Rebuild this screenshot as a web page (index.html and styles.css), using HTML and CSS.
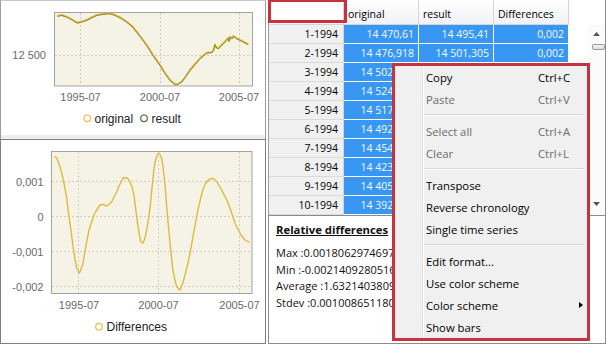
FILE: index.html
```html
<!DOCTYPE html>
<html>
<head>
<meta charset="utf-8">
<link rel="stylesheet" href="styles.css">
</head>
<body>
<div class="app">
  <div class="left">
    <div class="chart chart-top">
      <svg width="264" height="134" viewBox="1 1 264 134" xmlns="http://www.w3.org/2000/svg">
        <rect x="54.5" y="12.5" width="198" height="73.5" fill="#f5f3e6" stroke="#a3a3a3"/>
        <g stroke="#d0cdc0" stroke-dasharray="2,2" stroke-width="1">
          <line x1="80.5" y1="13" x2="80.5" y2="86"/>
          <line x1="160.5" y1="13" x2="160.5" y2="86"/>
          <line x1="239.5" y1="13" x2="239.5" y2="86"/>
          <line x1="55" y1="55.5" x2="252" y2="55.5"/>
        </g>
        <polyline fill="none" stroke="#e0c04c" stroke-width="2" stroke-linejoin="round" points="57.3,16 61.7,15 66.7,16.7 72,19.5 77.3,22.7 82,21.5 86.7,20 91.5,17.5 96.7,15 103,14 110,13.3 115,15 121,18 126.7,21.7 132,26 136.7,31.7 141.5,38 146.7,45 153,55 160,65 165,73 170,80 175,84.3 178,84 181.7,81.7 186,76 190,70 195,64 200,58.3 206.7,52.7 211.7,52.3 213.5,50 215,44.5 216.5,47.5 218.3,48.3 220,46.5 223.3,43.3 226,40.5 228,38 229,41 230,36.7 232,38.5 233.5,36 236.7,38.3 242,41 248.3,44.3"/>
        <polyline fill="none" stroke="#5b5f2c" stroke-width="0.8" stroke-opacity="0.75" stroke-linejoin="round" points="57.3,16.4 61.7,15.4 66.7,17.1 72,19.9 77.3,23.1 82,21.9 86.7,20.4 91.5,17.9 96.7,15.4 103,14.4 110,13.7 115,15.4 121,18.4 126.7,22.1 132,26.4 136.7,32.1 141.5,38.4 146.7,45.4 153,55.4 160,65.4 165,73.4 170,80.4 175,84.7 178,84.4 181.7,82.1 186,76.4 190,70.4 195,64.4 200,58.7 206.7,53.1 211.7,52.7 213.5,50.4 215,44.9 216.5,47.9 218.3,48.7 220,46.9 223.3,43.7 226,40.9 228,38.4 229,41.4 230,37.1 232,38.9 233.5,36.4 236.7,38.7 242,41.4 248.3,44.7"/>
        <g font-family="Liberation Sans, Arial, sans-serif" font-size="11" fill="#6a6a6a">
          <text x="46" y="59" text-anchor="end">12 500</text>
          <text x="80.5" y="100.5" text-anchor="middle">1995-07</text>
          <text x="160" y="100.5" text-anchor="middle">2000-07</text>
          <text x="239" y="100.5" text-anchor="middle">2005-07</text>
        </g>
        <circle cx="87.3" cy="118.3" r="3.3" fill="none" stroke="#e2c04a" stroke-width="1.2"/>
        <circle cx="144" cy="118.3" r="3.3" fill="none" stroke="#4f6a3a" stroke-width="1.2"/>
        <g font-family="Liberation Sans, Arial, sans-serif" font-size="12" fill="#222">
          <text x="94.5" y="122.5">original</text>
          <text x="151.5" y="122.5">result</text>
        </g>
      </svg>
    </div>
    <div class="splitter"></div>
    <div class="chart chart-bottom">
      <svg width="264" height="203" viewBox="1 140 264 203" xmlns="http://www.w3.org/2000/svg">
        <rect x="51.5" y="151.5" width="200.5" height="142" fill="#f5f3e6" stroke="#a3a3a3"/>
        <g stroke="#d0cdc0" stroke-dasharray="2,2" stroke-width="1">
          <line x1="78.5" y1="152" x2="78.5" y2="293"/>
          <line x1="158.5" y1="152" x2="158.5" y2="293"/>
          <line x1="239.5" y1="152" x2="239.5" y2="293"/>
          <line x1="52" y1="181.5" x2="252" y2="181.5"/>
          <line x1="52" y1="216.5" x2="252" y2="216.5"/>
          <line x1="52" y1="251.5" x2="252" y2="251.5"/>
          <line x1="52" y1="286.5" x2="252" y2="286.5"/>
        </g>
        <polyline fill="none" stroke="#e2b83c" stroke-width="1.4" stroke-linejoin="round" points="54.3,156.7 56.7,157.7 60,166.7 62,174 64.3,185 66.5,197 68.3,211.7 71,231 73.3,248.3 75,259 76.7,268.3 79.3,273.3 82.7,265 84.5,254 86.7,241.7 89,230 91.7,221.7 94,215 96.7,210 100,205 103.3,204.3 106.7,206 109,204.5 111.7,201.7 114,197 116.7,191.7 120,184 123.3,177.7 126,177.7 128,179 130,181.7 132,187 134,195 135.5,207 137.3,221.7 139,233 140.7,241.7 142.7,243.3 144.3,240 146,233.3 148,222 150,208.3 152,188 154,168.3 156,158 158.3,153.3 160,154.5 161.7,158.3 163.3,169 165,185 166.5,204 168.3,225 170.5,248 172.7,268.3 174.7,279 176.7,286.7 180,290 183.3,281.7 186,271 188.3,261.7 191,248 193.3,235 196,220 198.3,208.3 201,197 203.3,188.3 206,183 208.3,180 211.7,178.3 214,179 216.7,181.7 220,187 223.3,193.3 227,200.5 230,208.3 233,217 235,223.3 237.5,228.5 240,233.3 242.5,237 245,240 249.3,242.3"/>
        <g font-family="Liberation Sans, Arial, sans-serif" font-size="11" fill="#6a6a6a">
          <text x="43.5" y="185.5" text-anchor="end">0,001</text>
          <text x="43.5" y="220.5" text-anchor="end">0</text>
          <text x="43.5" y="255.5" text-anchor="end">-0,001</text>
          <text x="43.5" y="290.5" text-anchor="end">-0,002</text>
          <text x="79" y="309" text-anchor="middle">1995-07</text>
          <text x="158.5" y="309" text-anchor="middle">2000-07</text>
          <text x="239.5" y="309" text-anchor="middle">2005-07</text>
        </g>
        <circle cx="99" cy="326.7" r="3.3" fill="none" stroke="#e2c04a" stroke-width="1.2"/>
        <text x="106.5" y="331" font-family="Liberation Sans, Arial, sans-serif" font-size="12" fill="#222">Differences</text>
      </svg>
    </div>
  </div>
  <div class="gap"></div>
  <div class="right">
    <div class="grid-area">
      <div class="grid">
        <div class="corner"></div>
        <div class="hcell">original</div>
        <div class="hcell">result</div>
        <div class="hcell">Differences</div>

        <div class="rh">1-1994</div><div class="c">14 470,61</div><div class="c">14 495,41</div><div class="c">0,002</div>
        <div class="rh">2-1994</div><div class="c">14 476,918</div><div class="c">14 501,305</div><div class="c">0,002</div>
        <div class="rh">3-1994</div><div class="c">14 502,437</div><div class="c"></div><div class="c"></div>
        <div class="rh">4-1994</div><div class="c">14 524,806</div><div class="c"></div><div class="c"></div>
        <div class="rh">5-1994</div><div class="c">14 517,352</div><div class="c"></div><div class="c"></div>
        <div class="rh">6-1994</div><div class="c">14 492,571</div><div class="c"></div><div class="c"></div>
        <div class="rh">7-1994</div><div class="c">14 454,129</div><div class="c"></div><div class="c"></div>
        <div class="rh">8-1994</div><div class="c">14 423,685</div><div class="c"></div><div class="c"></div>
        <div class="rh">9-1994</div><div class="c">14 405,273</div><div class="c"></div><div class="c"></div>
        <div class="rh">10-1994</div><div class="c">14 392,948</div><div class="c"></div><div class="c"></div>
      </div>
      <div class="spacer"></div>
      <div class="vscroll">
        <svg class="arrow-up" width="7" height="4" viewBox="0 0 7 4"><path d="M0 4 L3.5 0 L7 4 Z" fill="#555"/></svg>
        <div class="thumb"></div>
        <div class="track"></div>
        <svg class="arrow-down" width="7" height="4" viewBox="0 0 7 4"><path d="M0 0 L3.5 4 L7 0 Z" fill="#555"/></svg>
      </div>
    </div>
    <div class="stats">
      <div class="stats-title">Relative differences</div>
      <div class="stats-line first">Max :0.0018062974697</div>
      <div class="stats-line">Min :-0.0021409280516</div>
      <div class="stats-line">Average :1.6321403809</div>
      <div class="stats-line">Stdev :0.001008651180</div>
    </div>
  </div>

  <div class="menu">
    <div class="mi"><span class="lbl">Copy</span><span class="sc">Ctrl+C</span></div>
    <div class="mi dis"><span class="lbl">Paste</span><span class="sc">Ctrl+V</span></div>
    <div class="sep"></div>
    <div class="mi dis"><span class="lbl">Select all</span><span class="sc">Ctrl+A</span></div>
    <div class="mi dis"><span class="lbl">Clear</span><span class="sc">Ctrl+L</span></div>
    <div class="sep"></div>
    <div class="mi"><span class="lbl">Transpose</span></div>
    <div class="mi"><span class="lbl">Reverse chronology</span></div>
    <div class="mi"><span class="lbl">Single time series</span></div>
    <div class="sep"></div>
    <div class="mi"><span class="lbl">Edit format...</span></div>
    <div class="mi"><span class="lbl">Use color scheme</span></div>
    <div class="mi"><span class="lbl">Color scheme</span><span class="sub"></span></div>
    <div class="mi"><span class="lbl">Show bars</span></div>
  </div>
</div>
</body>
</html>
```

FILE: styles.css
```css
*, *::before, *::after { box-sizing: border-box; margin: 0; padding: 0; }
html, body { width: 607px; height: 345px; overflow: hidden; background: #fff; }
body { font-family: "Open Sans", "Noto Sans", sans-serif; color: #000; }

.app { position: relative; display: flex; width: 607px; height: 345px; }

.left { width: 266px; height: 344px; display: flex; flex-direction: column; }
.chart svg { display: block; }
.chart-top { height: 135px; border: 1px solid #9c9c9c; border-bottom: none; border-top-color: #c8c8c8; }
.splitter { height: 4px; background: #eeeeee; border-left: 1px solid #9c9c9c; border-right: 1px solid #9c9c9c; }
.chart-bottom { flex: 1; border: 1px solid #7e7e7e; }

.gap { width: 2px; }

.right { width: 338px; height: 344px; display: flex; flex-direction: column; }

.grid-area { height: 215px; display: flex; border-right: 1px solid #8c8c8c; }
.grid {
  display: grid;
  grid-template-columns: 75px 75px 75px 75px;
  grid-template-rows: 25px repeat(10, 19px);
  width: 301px;
  border-left: 1px solid #a0a0a0;
  font-size: 10.5px;
  white-space: nowrap;
}
.corner { position: relative; background: #fff; border-right: 1px solid #d5d5d5; border-bottom: 1px solid #d5d5d5; }
.corner::after {
  content: "";
  position: absolute;
  left: -1px; top: -1px;
  width: 79px; height: 24px;
  border: 3px solid #c8323d;
}
.hcell {
  background: linear-gradient(#ffffff, #f1f2f4);
  border-right: 1px solid #d5d5d5;
  border-bottom: 1px solid #d5d5d5;
  padding: 4px 0 0 4px;
  line-height: 20px;
}
.rh {
  background: #f0f0f0;
  border-right: 1px solid #d5d5d5;
  border-bottom: 1px solid #dadada;
  text-align: right;
  padding-right: 5px;
  line-height: 18px;
}
.c {
  background: #3897f3;
  color: #f4f9ff;
  border-right: 1px solid #fff;
  border-bottom: 1px solid #fff;
  text-align: right;
  padding-right: 4px;
  line-height: 18px;
}

.spacer { flex: 1; }
.vscroll {
  width: 17px;
  margin-top: 25px;
  display: flex;
  flex-direction: column;
  align-items: center;
  background: #fbfbfb;
}
.arrow-up { margin-top: 7px; }
.thumb {
  margin-top: 8px;
  width: 13px; height: 6px;
  border: 1px solid #9a9a9a;
  border-radius: 2px;
  background: linear-gradient(#f4f4f4, #dcdcdc);
  margin-left: 3px;
}
.track { flex: 1; }
.arrow-down { margin-bottom: 9px; }

.stats {
  flex: 1;
  border: 1px solid #8c8c8c;
  padding: 5px 0 0 7px;
  font-size: 11px;
  white-space: nowrap;
  color: #111;
}
.stats-title { font-weight: 700; text-decoration: underline; line-height: 17px; font-size: 11.3px; }
.stats-line { line-height: 16.6px; }
.stats-line.first { margin-top: 7px; }

.menu {
  position: absolute;
  left: 392px; top: 63px;
  width: 198px; height: 278px;
  border: 3px solid #c8323d;
  background-color: #f0f0f0;
  background-image: linear-gradient(to right, transparent 27px, #e2e3e3 27px, #e2e3e3 28px, #ffffff 28px, #ffffff 29px, transparent 29px);
  font-size: 11.3px;
  white-space: nowrap;
}
.mi { height: 22px; display: flex; align-items: center; padding-left: 31px; }
.mi .lbl { width: 112px; }
.mi.dis { color: #6d6d6d; }
.sep { height: 10px; margin: 0 3px 0 29px; position: relative; }
.sep::before {
  content: "";
  position: absolute;
  left: 0; right: 0; top: 4px;
  border-top: 1px solid #d7d7d7;
  border-bottom: 1px solid #ffffff;
}
.sub {
  margin-left: auto;
  margin-right: 4px;
  width: 0; height: 0;
  border-top: 3.5px solid transparent;
  border-bottom: 3.5px solid transparent;
  border-left: 4px solid #000;
}
```
